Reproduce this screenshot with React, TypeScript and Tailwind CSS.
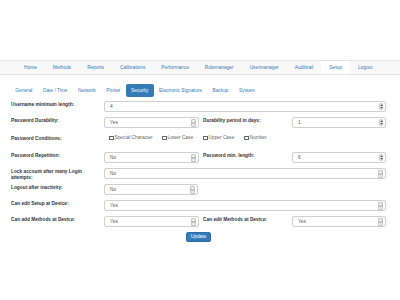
import React from 'react';

const mainNav = ['Home', 'Methods', 'Reports', 'Calibrations', 'Performance', 'Rolemanager', 'Usermanager', 'Audittrail', 'Setup', 'Logout'];
const subNav = ['General', 'Date / Time', 'Network', 'Printer', 'Security', 'Electronic Signature', 'Backup', 'System'];

const SelectArrow = () => (
  <div className="flex h-[8px] w-[5px] items-center justify-center rounded-[1px] border border-[#c4c4c4] bg-[#ececec]">
    <svg width="3" height="2" viewBox="0 0 3 2">
      <path d="M0 0 L1.5 2 L3 0" fill="none" stroke="#777" strokeWidth="0.6" />
    </svg>
  </div>
);

const Spinner = () => (
  <div className="flex h-[7px] w-[4px] flex-col items-center justify-center gap-[1px] rounded-[1px] border border-[#d4d4d4] bg-[#f2f2f2]">
    <svg width="3" height="2" viewBox="0 0 3 2"><path d="M0 2 L1.5 0 L3 2 Z" fill="#666" /></svg>
    <svg width="3" height="2" viewBox="0 0 3 2"><path d="M0 0 L1.5 2 L3 0 Z" fill="#666" /></svg>
  </div>
);

const Field = ({ value, w, kind }: { value: string; w: string; kind: 'select' | 'number' | 'text' }) => (
  <div className={`flex h-[11px] items-center justify-between rounded-[2px] border border-[#cfcfcf] bg-white pl-[5px] pr-[2px] text-[#555] ${w}`}>
    <span>{value}</span>
    {kind === 'select' && <SelectArrow />}
    {kind === 'number' && <Spinner />}
  </div>
);

const Label = ({ children, w = 'w-[93px]' }: { children: React.ReactNode; w?: string }) => (
  <div className={`shrink-0 pt-[1px] pr-[12px] font-bold leading-[6px] text-[#333] ${w}`}>{children}</div>
);

const Check = ({ label, w }: { label: string; w: string }) => (
  <div className={`flex items-center gap-[1px] ${w}`}>
    <span className="inline-block h-[4.5px] w-[4.5px] border border-[#666] bg-white" />
    <span className="text-[#666]">{label}</span>
  </div>
);

export default function App() {
  return (
    <div className="h-[300px] w-[400px] overflow-hidden bg-white text-[4.8px] [font-family:'Liberation_Sans',Arial,sans-serif]">
      <div className="h-[60px]" />

      <div className="flex h-[15px] border-y border-[#e4e4e4] bg-[#f8f8f8] pl-[16px]">
        {mainNav.map(n => (
          <div key={n} className={`flex items-center px-[8px] text-[#337ab7] ${n === 'Setup' ? 'bg-white' : ''}`}>{n}</div>
        ))}
      </div>

      <div className="mt-[9px] flex h-[13px] pl-[10px]">
        {subNav.map(n => (
          <div key={n} className={`flex items-center rounded-[2px] px-[5.3px] ${n === 'Security' ? 'bg-[#337ab7] text-white' : 'text-[#337ab7]'}`}>{n}</div>
        ))}
      </div>

      <div className="mt-[4px] pl-[11px]">
        <div className="flex h-[16px] items-start">
          <Label>Username minimum length:</Label>
          <Field value="4" w="w-[282px]" kind="number" />
        </div>

        <div className="flex h-[16px] items-start">
          <Label>Password Durability:</Label>
          <Field value="Yes" w="w-[95px]" kind="select" />
          <div className="w-[4px]" />
          <Label w="w-[89px]">Durability period in days:</Label>
          <Field value="1" w="w-[94px]" kind="number" />
        </div>

        <div className="flex h-[19px] items-start pt-[2px]">
          <Label>Password Conditions:</Label>
          <div className="flex pl-[5px] leading-[6px]">
            <Check label="Special Character" w="w-[53px]" />
            <Check label="Lower Case" w="w-[41px]" />
            <Check label="Upper Case" w="w-[41px]" />
            <Check label="Number" w="w-[40px]" />
          </div>
        </div>

        <div className="flex h-[16px] items-start">
          <Label>Password Repetition:</Label>
          <Field value="No" w="w-[95px]" kind="select" />
          <div className="w-[4px]" />
          <Label w="w-[89px]">Password min. length:</Label>
          <Field value="6" w="w-[94px]" kind="number" />
        </div>

        <div className="flex h-[16px] items-start">
          <Label>Lock account after many Login attempts:</Label>
          <Field value="No" w="w-[282px]" kind="select" />
        </div>

        <div className="flex h-[16px] items-start">
          <Label>Logout after inactivity:</Label>
          <Field value="No" w="w-[94px]" kind="select" />
        </div>

        <div className="flex h-[16px] items-start">
          <Label>Can edit Setup at Device:</Label>
          <Field value="Yes" w="w-[282px]" kind="select" />
        </div>

        <div className="flex h-[16px] items-start">
          <Label>Can add Methods at Device:</Label>
          <Field value="Yes" w="w-[95px]" kind="select" />
          <div className="w-[4px]" />
          <Label w="w-[89px]">Can edit Methods at Device:</Label>
          <Field value="Yes" w="w-[94px]" kind="select" />
        </div>

        <div className="flex w-[375px] justify-center">
          <button className="h-[10px] rounded-[2px] border border-[#2e6da4] bg-[#337ab7] px-[4px] text-white">Update</button>
        </div>
      </div>
    </div>
  );
}
